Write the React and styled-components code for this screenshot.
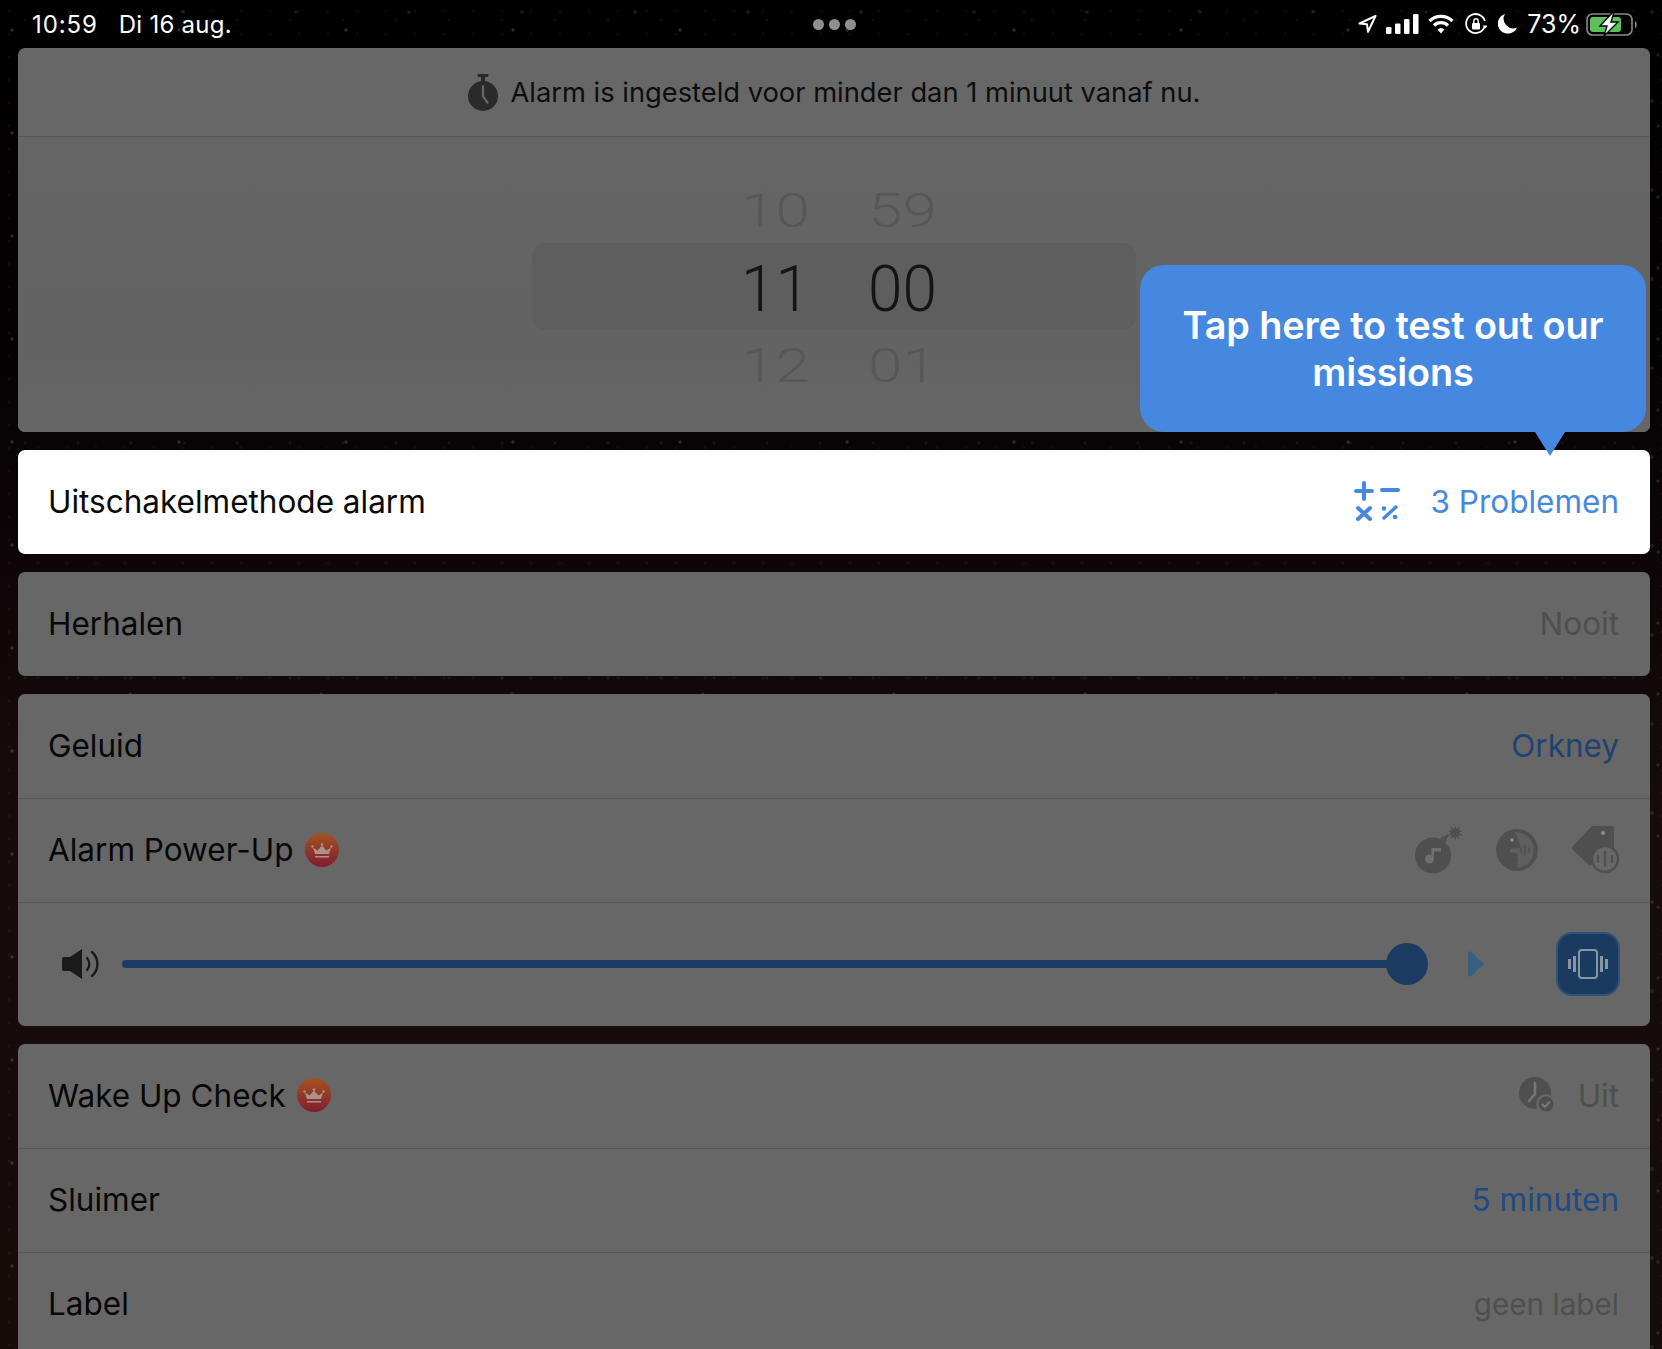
import React from "react";
import styled, { createGlobalStyle } from "styled-components";

const Global = createGlobalStyle`
  html, body { margin: 0; padding: 0; background: #050204; }
  * { box-sizing: border-box; }
`;

const Page = styled.div`
  position: relative;
  width: 1662px;
  height: 1349px;
  overflow: hidden;
  font-family: Inter, "Liberation Sans", sans-serif;
  color: #070707;
  background-color: #060304;
  background-image:
    radial-gradient(circle at 12px 30px, rgba(210,205,225,.2) 0 1px, transparent 2.2px),
    radial-gradient(circle at 70px 12px, rgba(200,170,170,.14) 0 1.2px, transparent 2.4px),
    radial-gradient(circle at 44px 80px, rgba(190,170,220,.14) 0 1px, transparent 2.2px),
    radial-gradient(circle at 130px 55px, rgba(220,200,170,.16) 0 1px, transparent 2px),
    radial-gradient(circle at 25px 20px, rgba(220,200,200,.07) 0 1px, transparent 2px),
    radial-gradient(circle at 9px 11px, rgba(200,150,150,.06) 0 1px, transparent 2px),
    linear-gradient(180deg, #010001 0%, #050203 25%, #0b0406 38%, #170b0d 60%, #160c09 100%);
  background-size: 167px 103px, 113px 89px, 139px 131px, 191px 71px, 53px 47px, 29px 23px, 100% 100%;
`;

const Status = styled.header`
  height: 48px;
  padding: 0 24px 0 32px;
  display: grid;
  grid-template-columns: 1fr auto 1fr;
  align-items: center;
  color: #fff;
`;
const StatusLeft = styled.div`
  display: flex;
  gap: 21px;
  font-size: 24px;
  letter-spacing: 0.25px;
`;
const Clock = styled.span`
  letter-spacing: 0.9px;
`;
const Dots = styled.div`
  display: flex;
  gap: 5px;
  transform: translateX(-1px);
`;
const Dot = styled.span`
  width: 11px;
  height: 11px;
  border-radius: 50%;
  background: #8f8f8f;
`;
const StatusRight = styled.div`
  display: flex;
  justify-content: flex-end;
  align-items: center;
  gap: 11px;
  font-size: 25px;
`;
const RadioGroup = styled.div`
  display: flex;
  align-items: center;
  gap: 9px;
`;
const Percent = styled.span`
  margin: 0 -6px 0 -1px;
`;

const Stack = styled.main`
  padding: 0 12px 0 18px;
  display: flex;
  flex-direction: column;
  gap: 18px;
`;
const Panel = styled.section`
  background: ${(p) => (p.$lit ? "#fff" : "#676767")};
  border-radius: 7px;
  overflow: hidden;
`;
const Notice = styled.div`
  height: 89px;
  border-bottom: 1px solid #575757;
  display: flex;
  align-items: center;
  justify-content: center;
  gap: 13px;
  font-size: 27.3px;
  color: #0d0d0d;
`;
const PickerArea = styled.div`
  height: 295px;
  padding-top: 55px;
  display: flex;
  justify-content: center;
  background: linear-gradient(180deg, #656565, #636363 70%, #666);
`;
const Wheel = styled.div`
  width: 604px;
  display: flex;
  flex-direction: column;
`;
const WheelRow = styled.div`
  height: ${(p) => (p.$active ? "87px" : "36px")};
  margin-bottom: ${(p) => (p.$active ? "17px" : "15px")};
  padding-left: 209px;
  display: flex;
  align-items: center;
  gap: 57px;
  background: ${(p) => (p.$active ? "#5e5e5e" : "transparent")};
  border-radius: 14px;
  font-family: Roboto, "Liberation Sans", sans-serif;
  font-weight: 300;
  font-size: 62px;
  line-height: 36px;
  color: ${(p) => (p.$active ? "#141414" : "#575757")};
`;
const Digits = styled.span`
  width: 70px;
  font-variant-numeric: tabular-nums;
  transform: ${(p) => (p.$active ? "translateY(2px) scaleY(1.06)" : "translateY(1px) scaleY(0.78)")};
`;

const Row = styled.div`
  height: ${(p) => (p.$tall ? "124px" : "104px")};
  padding: 0 31px 2px 30px;
  display: flex;
  align-items: center;
  justify-content: space-between;
  font-size: 31.5px;
  & + & {
    border-top: 1px solid #575757;
  }
`;
const Label = styled.div`
  display: flex;
  align-items: center;
  gap: 11px;
`;
const Value = styled.div`
  display: flex;
  align-items: center;
  gap: ${(p) => p.$gap || 32}px;
  color: ${(p) => p.$color || "#4f4f4f"};
`;
const PlainValue = styled(Value)`
  font-size: ${(p) => p.$size || 31.5}px;
`;
const PowerIcons = styled.div`
  display: flex;
  align-items: center;
  gap: 33px;
`;
const SliderRow = styled(Row)`
  padding: 0 30px 1px 44px;
  gap: 23px;
  justify-content: flex-start;
`;
const Track = styled.div`
  position: relative;
  width: 1304px;
  height: 8px;
  border-radius: 4px;
  background: #1c3b63;
`;
const Thumb = styled.span`
  position: absolute;
  right: -2px;
  top: -17px;
  width: 42px;
  height: 42px;
  border-radius: 50%;
  background: #1c3b63;
`;
const ArrowSlot = styled.span`
  display: flex;
  margin-left: 19px;
`;
const VibrateButton = styled.button`
  margin-left: auto;
  width: 64px;
  height: 64px;
  padding: 0;
  display: flex;
  align-items: center;
  justify-content: center;
  border-radius: 16px;
  background: #1b3a60;
  border: 2px solid #2f5478;
`;
const Tooltip = styled.div`
  position: absolute;
  left: 1140px;
  top: 265px;
  width: 506px;
  height: 167px;
  padding: 1px 30px 0;
  display: flex;
  align-items: center;
  justify-content: center;
  text-align: center;
  background: #4688e0;
  border-radius: 24px;
  color: #fff;
  font-size: 37.8px;
  font-weight: 600;
  letter-spacing: -0.1px;
  line-height: 47px;
  &::after {
    content: "";
    position: absolute;
    right: 81px;
    bottom: -24px;
    border-left: 15px solid transparent;
    border-right: 15px solid transparent;
    border-top: 24px solid #4688e0;
  }
`;

const Crown = () => (
  <svg width="34" height="34" viewBox="0 0 34 34">
    <defs>
      <linearGradient id="cg" x1="0" y1="0" x2="0" y2="1">
        <stop offset="0" stopColor="#a3531f" />
        <stop offset="1" stopColor="#821c31" />
      </linearGradient>
    </defs>
    <circle cx="17" cy="17" r="17" fill="url(#cg)" />
    <path d="M8 14.5 12.5 17.5 17 12.5 21.5 17.5 26 14.5 24 21H10Z" fill="#ad918a" />
    <circle cx="7.5" cy="13.5" r="1.2" fill="#ad918a" />
    <circle cx="26.5" cy="13.5" r="1.2" fill="#ad918a" />
    <circle cx="17" cy="11.5" r="1.3" fill="#ad918a" />
    <rect x="10" y="23" width="14" height="1.5" fill="#ad918a" />
  </svg>
);
const Stopwatch = () => (
  <svg width="30" height="37" viewBox="0 0 30 37">
    <rect x="9.5" y="0" width="11" height="3" rx="1" fill="#2a2a2a" />
    <rect x="13" y="2" width="4" height="6" fill="#2a2a2a" />
    <circle cx="15" cy="22" r="15" fill="#2a2a2a" />
    <path d="M15 12v10.5l4.5 6" stroke="#676767" strokeWidth="2.2" fill="none" strokeLinecap="round" />
  </svg>
);
const MathIcon = () => (
  <svg width="46" height="42" viewBox="0 0 46 42" stroke="#4688e0" strokeWidth="4" strokeLinecap="round" fill="none">
    <path d="M2 11h16M10 3v16" />
    <path d="M28 10h16" />
    <path d="M4 28l12 11M16 28 4 39" />
    <path d="M30 38l12-11" strokeWidth="3.4" />
    <circle cx="30" cy="28.5" r="1.6" fill="#4688e0" strokeWidth="1.5" />
    <circle cx="41" cy="37" r="1.6" fill="#4688e0" strokeWidth="1.5" />
  </svg>
);
const starPoints = Array.from({ length: 20 }, (_, i) => {
  const r = i % 2 ? 4 : 8;
  const a = (i * Math.PI) / 10;
  return `${(40 + r * Math.sin(a)).toFixed(1)},${(7 - r * Math.cos(a)).toFixed(1)}`;
}).join(" ");
const Bomb = () => (
  <svg width="48" height="48" viewBox="0 0 48 48">
    <circle cx="18" cy="29.5" r="18" fill="#4f4f4f" />
    <path d="M24 14l4-4 1 1 3-3 2 2-3 3 1 1-4 5z" fill="#4f4f4f" />
    <polygon points={starPoints} fill="#4f4f4f" />
    <circle cx="14.5" cy="33" r="4.5" fill="#6f6f6f" />
    <rect x="16.5" y="23" width="2.5" height="10" fill="#6f6f6f" />
    <rect x="16.5" y="22" width="9.5" height="3.5" fill="#6f6f6f" />
  </svg>
);
const FaceSound = () => (
  <svg width="42" height="42" viewBox="0 0 42 42">
    <circle cx="21" cy="21" r="21" fill="#4f4f4f" />
    <path d="M19 3.2A17.8 17.8 0 0 1 21 38.8l1-9-1-2 1-2-2-2h-4a2.2 2.2 0 0 1 0-4.5h6l3-1z" fill="#5f5f5f" />
    <circle cx="16" cy="11" r="1.8" fill="#8b8b8b" />
    <path d="M25 19v4M29 16v10M33 19v4" stroke="#4f4f4f" strokeWidth="1.6" strokeLinecap="round" />
  </svg>
);
const TagSound = () => (
  <svg width="48" height="47" viewBox="0 0 48 47">
    <path d="M21 0h20a2 2 0 0 1 2 2v20L19 40 2 24a3 3 0 0 1 0-4z" fill="#4f4f4f" />
    <circle cx="32" cy="7" r="2" fill="#8a8a8a" />
    <circle cx="34" cy="33" r="13" fill="#676767" stroke="#4f4f4f" strokeWidth="2.5" />
    <path d="M27 30v6M34 26v14M41 30v6" stroke="#4f4f4f" strokeWidth="2.2" strokeLinecap="round" />
  </svg>
);
const Speaker = () => (
  <svg width="37" height="30" viewBox="0 0 37 30">
    <path d="M0 10a2 2 0 0 1 2-2h6L20 0v30L8 22H2a2 2 0 0 1-2-2z" fill="#1a1a1a" />
    <path d="M25 9a9 9 0 0 1 0 12" stroke="#1a1a1a" strokeWidth="2.2" fill="none" strokeLinecap="round" />
    <path d="M30 3a16 16 0 0 1 0 24" stroke="#1a1a1a" strokeWidth="2.4" fill="none" strokeLinecap="round" />
  </svg>
);
const PlayArrow = () => (
  <svg width="16" height="26" viewBox="0 0 16 26">
    <path d="M0 2.5C0 .5 2 -.5 3.4 1L16 13 3.4 25C2 26.5 0 25.5 0 23.5z" fill="#3b5d81" />
  </svg>
);
const Vibrate = () => (
  <svg width="40" height="30" viewBox="0 0 40 30" fill="none">
    <rect x="11" y="1" width="18" height="28" rx="3" stroke="#8795a5" strokeWidth="2" />
    <rect x="0" y="10" width="3" height="10" fill="#8795a5" />
    <rect x="5" y="7" width="3" height="16" fill="#8795a5" />
    <rect x="32" y="7" width="3" height="16" fill="#8795a5" />
    <rect x="37" y="10" width="3" height="10" fill="#8795a5" />
  </svg>
);
const ClockCheck = () => (
  <svg width="37" height="37" viewBox="0 0 37 37">
    <circle cx="16" cy="16" r="16" fill="#4f4f4f" />
    <path d="M16 6v11l-6 7" stroke="#767676" strokeWidth="2.6" fill="none" strokeLinecap="round" />
    <circle cx="27" cy="27" r="10" fill="#676767" />
    <circle cx="27" cy="27" r="7.5" fill="#4f4f4f" />
    <path d="M23 27l3 3 5-5.5" stroke="#7a7a7a" strokeWidth="2" fill="none" />
  </svg>
);
const LocationArrow = () => (
  <svg width="19" height="18" viewBox="0 0 19 18" fill="none">
    <path d="M17.5 1 1.5 8.5l7.5.8 1 7.5z" stroke="#fff" strokeWidth="2" strokeLinejoin="round" />
  </svg>
);
const Signal = () => (
  <svg width="33" height="20" viewBox="0 0 33 20" fill="#fff">
    <rect x="0" y="13" width="5.5" height="7" rx="1.3" />
    <rect x="9" y="9.5" width="5.5" height="10.5" rx="1.3" />
    <rect x="18" y="5" width="5.5" height="15" rx="1.3" />
    <rect x="27" y="0" width="5.5" height="20" rx="1.3" />
  </svg>
);
const Wifi = () => (
  <svg width="26" height="20" viewBox="0 0 26 20" fill="none" stroke="#fff" strokeWidth="3.2">
    <path d="M1.5 7a16.5 16.5 0 0 1 23 0" />
    <path d="M6 11.5a10 10 0 0 1 14 0" />
    <path d="M13 19.5 9.6 15.6a5 5 0 0 1 6.8 0z" fill="#fff" stroke="none" />
  </svg>
);
const RotationLock = () => (
  <svg width="22" height="22" viewBox="0 0 22 22" fill="none">
    <path d="M19.5 14a9.5 9.5 0 1 1 .3-6" stroke="#fff" strokeWidth="1.8" />
    <path d="M20.5 15.5l-3-3h5z" fill="#fff" />
    <rect x="7" y="10" width="8" height="6.5" rx="1" fill="#fff" />
    <path d="M8.8 10V8a2.2 2.2 0 0 1 4.4 0v2" stroke="#fff" strokeWidth="1.4" />
  </svg>
);
const Moon = () => (
  <svg width="19" height="20" viewBox="0 0 19 20">
    <path d="M7 0a10 10 0 1 0 12 13.5A9.5 9.5 0 0 1 7 0z" fill="#fff" />
  </svg>
);
const Battery = () => (
  <svg width="52" height="24" viewBox="0 0 52 24" fill="none">
    <rect x="1" y="2" width="45" height="21" rx="5.5" stroke="#8a8a8a" strokeWidth="1.6" />
    <rect x="4" y="5" width="31" height="15" rx="3" fill="#5bc25b" />
    <path d="M49 9c2 .5 2.5 6.5 0 7z" fill="#8a8a8a" />
    <path d="M27 0 14 14h7l-3 10 14-14h-7l3-10z" fill="#fff" stroke="#060304" strokeWidth="1.4" />
  </svg>
);

const wheel = [
  ["10", "59"],
  ["11", "00", true],
  ["12", "01"],
];

export default function App() {
  return (
    <Page>
      <Global />
      <Status>
        <StatusLeft>
          <Clock>10:59</Clock>
          <span>Di 16 aug.</span>
        </StatusLeft>
        <Dots>
          <Dot />
          <Dot />
          <Dot />
        </Dots>
        <StatusRight>
          <RadioGroup>
            <LocationArrow />
            <Signal />
            <Wifi />
          </RadioGroup>
          <RotationLock />
          <Moon />
          <Percent>73%</Percent>
          <Battery />
        </StatusRight>
      </Status>
      <Stack>
        <Panel>
          <Notice>
            <Stopwatch />
            <span>Alarm is ingesteld voor minder dan 1 minuut vanaf nu.</span>
          </Notice>
          <PickerArea>
            <Wheel>
              {wheel.map(([h, m, active]) => (
                <WheelRow key={h} $active={active}>
                  <Digits $active={active}>{h}</Digits>
                  <Digits $active={active}>{m}</Digits>
                </WheelRow>
              ))}
            </Wheel>
          </PickerArea>
        </Panel>
        <Panel $lit>
          <Row>
            <Label>Uitschakelmethode alarm</Label>
            <Value $color="#4688e0" $gap={30}>
              <MathIcon />
              <span>3 Problemen</span>
            </Value>
          </Row>
        </Panel>
        <Panel>
          <Row>
            <Label>Herhalen</Label>
            <Value>Nooit</Value>
          </Row>
        </Panel>
        <Panel>
          <Row>
            <Label>Geluid</Label>
            <Value $color="#1f4270">Orkney</Value>
          </Row>
          <Row>
            <Label>
              Alarm Power-Up <Crown />
            </Label>
            <PowerIcons>
              <Bomb />
              <FaceSound />
              <TagSound />
            </PowerIcons>
          </Row>
          <SliderRow $tall>
            <Speaker />
            <Track>
              <Thumb />
            </Track>
            <ArrowSlot>
              <PlayArrow />
            </ArrowSlot>
            <VibrateButton aria-label="Trillen">
              <Vibrate />
            </VibrateButton>
          </SliderRow>
        </Panel>
        <Panel>
          <Row>
            <Label>
              Wake Up Check <Crown />
            </Label>
            <Value $gap={22}>
              <ClockCheck />
              <span>Uit</span>
            </Value>
          </Row>
          <Row>
            <Label>Sluimer</Label>
            <Value $color="#1e4a85">5 minuten</Value>
          </Row>
          <Row>
            <Label>Label</Label>
            <PlainValue $size={29.7}>geen label</PlainValue>
          </Row>
        </Panel>
      </Stack>
      <Tooltip>Tap here to test out our missions</Tooltip>
    </Page>
  );
}
